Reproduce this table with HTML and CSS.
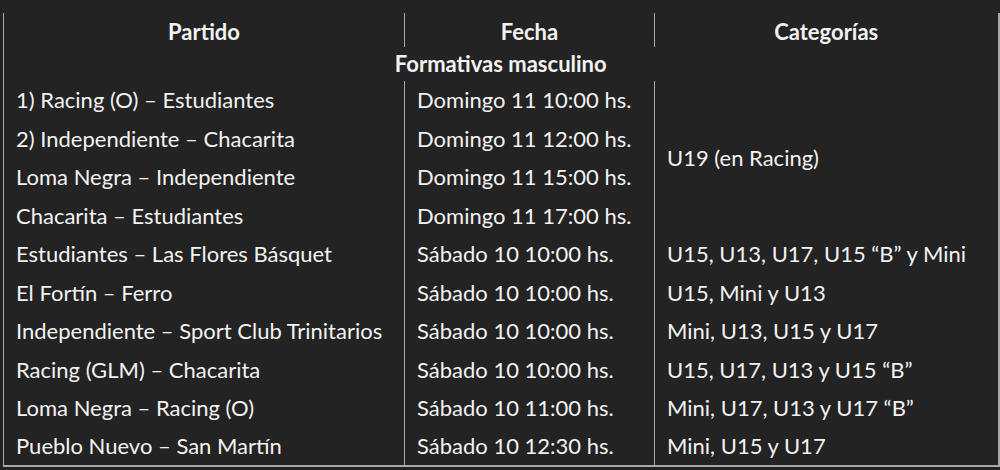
FILE: index.html
```html
<!DOCTYPE html>
<html lang="es">
<head>
<meta charset="utf-8">
<title>Formativas masculino</title>
<link rel="stylesheet" href="styles.css">
</head>
<body>
<div class="wrap">
<table class="fixture">
  <colgroup>
    <col class="c1">
    <col class="c2">
    <col class="c3">
  </colgroup>
  <thead>
    <tr class="head">
      <th>Partido</th>
      <th class="div">Fecha</th>
      <th class="div">Categorías</th>
    </tr>
    <tr class="section">
      <th colspan="3">Formativas masculino</th>
    </tr>
  </thead>
  <tbody>
    <tr>
      <td>1) Racing (O) – Estudiantes</td>
      <td class="div">Domingo 11 10:00 hs.</td>
      <td class="div" rowspan="4">U19 (en Racing)</td>
    </tr>
    <tr>
      <td>2) Independiente – Chacarita</td>
      <td class="div">Domingo 11 12:00 hs.</td>
    </tr>
    <tr>
      <td>Loma Negra – Independiente</td>
      <td class="div">Domingo 11 15:00 hs.</td>
    </tr>
    <tr>
      <td>Chacarita – Estudiantes</td>
      <td class="div">Domingo 11 17:00 hs.</td>
    </tr>
    <tr>
      <td>Estudiantes – Las Flores Básquet</td>
      <td class="div">Sábado 10 10:00 hs.</td>
      <td class="div">U15, U13, U17, U15 “B” y Mini</td>
    </tr>
    <tr>
      <td>El Fortín – Ferro</td>
      <td class="div">Sábado 10 10:00 hs.</td>
      <td class="div">U15, Mini y U13</td>
    </tr>
    <tr>
      <td>Independiente – Sport Club Trinitarios</td>
      <td class="div">Sábado 10 10:00 hs.</td>
      <td class="div">Mini, U13, U15 y U17</td>
    </tr>
    <tr>
      <td>Racing (GLM) – Chacarita</td>
      <td class="div">Sábado 10 10:00 hs.</td>
      <td class="div">U15, U17, U13 y U15 “B”</td>
    </tr>
    <tr>
      <td>Loma Negra – Racing (O)</td>
      <td class="div">Sábado 10 11:00 hs.</td>
      <td class="div">Mini, U17, U13 y U17 “B”</td>
    </tr>
    <tr>
      <td>Pueblo Nuevo – San Martín</td>
      <td class="div">Sábado 10 12:30 hs.</td>
      <td class="div">Mini, U15 y U17</td>
    </tr>
  </tbody>
</table>
</div>
</body>
</html>
```

FILE: styles.css
```css
html, body {
  margin: 0;
  padding: 0;
  background: #232323;
}

body {
  font-family: Lato, "Open Sans", "Liberation Sans", sans-serif;
  color: #f2f2f2;
  font-size: 22px;
}

.wrap {
  padding: 13px 2px 0 3px;
}

.fixture {
  width: 995px;
  border-collapse: collapse;
  table-layout: fixed;
  border-left: 1px solid #a8a8a8;
  border-right: 2px solid #a8a8a8;
  border-bottom: 2px solid #a8a8a8;
}

.c1 { width: 401px; }
.c2 { width: 250px; }
.c3 { width: 344px; }

.fixture th,
.fixture td {
  padding: 0 0 0 12px;
  line-height: 26px;
  text-align: left;
  font-weight: normal;
  white-space: nowrap;
  vertical-align: middle;
}

.fixture .div {
  border-left: 1px solid #a8a8a8;
}

.head {
  height: 34px;
}

.head th {
  font-weight: bold;
  text-align: center;
  padding: 3px 0 0;
}

.section {
  height: 34px;
}

.section th {
  font-weight: bold;
  text-align: center;
  padding: 0;
}

tbody tr {
  height: 38.5px;
}

tbody td {
  padding-top: 5px;
}
```
